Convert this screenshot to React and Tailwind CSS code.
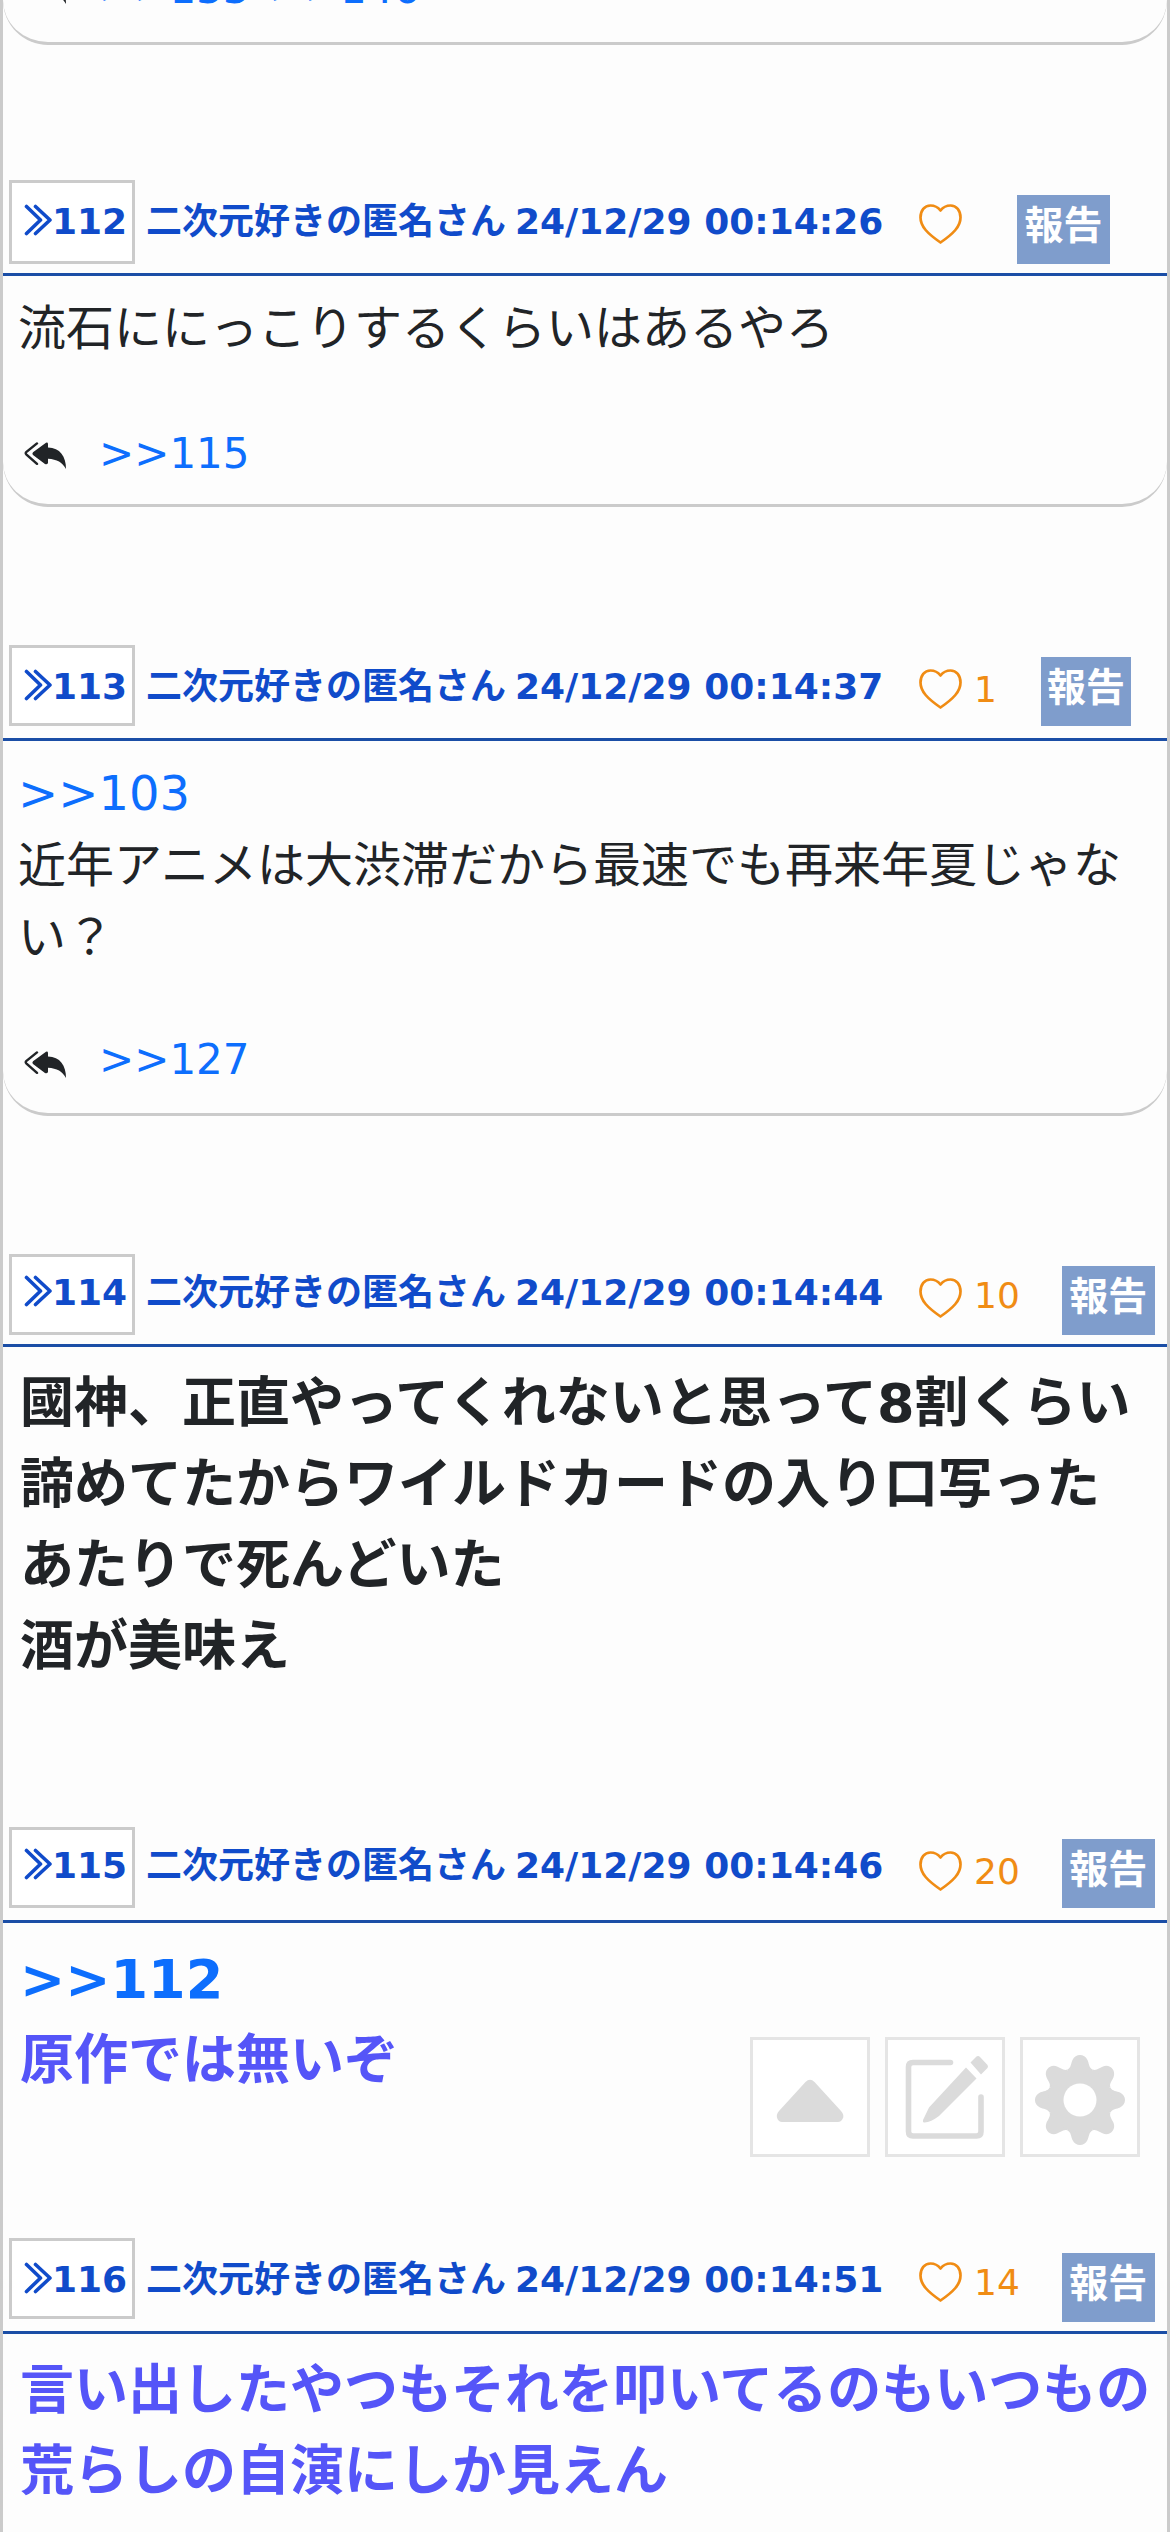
const posts = [
  {
    no: 112, time: '24/12/29 00:14:26', likes: '', gap: 'mt-[135px]', head: 'h-24', box: 'h-[84px] pt-3', name: 'mt-3',
    heart: 'mt-6', count: 'mt-[21px]', report: 'mt-[15px] w-[93px] ml-[55px]',
    card: 'h-[231px] rounded-b-[45px] border-b-[3px]',
    text: 'text-5xl leading-[72px] text-[#212427] pl-[15px]', lines: ['流石ににっこりするくらいはあるやろ'], reply: '>>115', replyGap: 'mt-[58px]', icon: 'mt-5',
  },
  {
    no: 113, time: '24/12/29 00:14:37', likes: '1', gap: 'mt-[138px]', head: 'h-24', box: 'h-[81px] pt-3', name: 'mt-3',
    heart: 'mt-6', count: 'mt-[15px]', report: 'mt-3 w-[90px] ml-[44px]',
    card: 'h-[375px] rounded-b-[45px] border-b-[3px]',
    text: 'text-5xl leading-[72px] text-[#212427] pl-[15px]', quote: '>>103',
    lines: ['近年アニメは大渋滞だから最速でも再来年夏じゃな', 'い？'], reply: '>>127', replyGap: 'mt-[55px]', icon: 'mt-[23px]',
  },
  {
    no: 114, time: '24/12/29 00:14:44', likes: '10', gap: 'mt-[138px]', head: 'h-[93px]', box: 'h-[81px] pt-[9px]', name: 'mt-[9px]',
    heart: 'mt-6', count: 'mt-3', report: 'mt-3 w-[93px] ml-[42px]',
    card: 'h-[480px]',
    text: 'text-[54px] leading-[81px] font-bold text-[#212427] pl-[17px]',
    lines: ['國神、正直やってくれないと思って8割くらい', '諦めてたからワイルドカードの入り口写った', 'あたりで死んどいた', '酒が美味え'],
  },
  {
    no: 115, time: '24/12/29 00:14:46', likes: '20', gap: '', head: 'h-24', box: 'h-[81px] pt-[9px]', name: 'mt-[9px]',
    heart: 'mt-6', count: 'mt-[15px]', report: 'mt-3 w-[93px] ml-[42px]',
    card: 'h-[315px]',
    text: 'text-[54px] leading-[81px] font-bold text-[#5555f8] pl-[17px]', quote: '>>112',
    lines: ['原作では無いぞ'],
  },
  {
    no: 116, time: '24/12/29 00:14:51', likes: '14', gap: '', head: 'h-24', box: 'h-[81px] pt-3', name: 'mt-3',
    heart: 'mt-6', count: 'mt-[15px]', report: 'mt-[15px] w-[93px] ml-[42px]',
    card: 'h-[198px]',
    text: 'text-[54px] leading-[81px] font-bold text-[#5555f8] pl-[17px]',
    lines: ['言い出したやつもそれを叩いてるのもいつもの', '荒らしの自演にしか見えん'],
  },
];

function Angles() {
  return (
    <svg className="mt-[9px] h-8 w-7 shrink-0" viewBox="0 0 28 32" fill="none" stroke="currentColor" strokeWidth="3.6" strokeLinecap="round" strokeLinejoin="round">
      <path d="M2.500 2.500 16.500 16 2.500 29.500M11.500 2.500 26 16 11.500 29.500" />
    </svg>
  );
}

function Heart() {
  return (
    <svg className="h-10 w-[43px]" viewBox="0 0 43 40" fill="none" stroke="#f08c14" strokeWidth="2.7" strokeLinejoin="round">
      <path d="M21.500 6.500C18 2 13.500 1.500 11.500 1.500C5.500 1.500 1.500 6.500 1.500 13.500C1.500 22.500 8.500 29.500 21.500 38.500C34.500 29.500 41.500 22.500 41.500 13.500C41.500 6.500 37.500 1.500 31.500 1.500C29.500 1.500 25 2 21.500 6.500Z" />
    </svg>
  );
}

function ReplyAll() {
  return (
    <svg className="h-7 w-[42px]" viewBox="0 0 42 30" preserveAspectRatio="none" fill="none">
      <path d="M13 1.500 2.500 10.500Q1 12 2.500 13.500L13 23.500" stroke="#212427" strokeWidth="2.400" strokeLinecap="round" />
      <path d="M22 .7Q24 .2 24 2.200V6C36 6 42 16 42 29C38.500 22 33 18.500 24 18V22.500Q23 24.500 21 23.500L9 14Q7.700 12.500 9 11Z" fill="#212427" />
    </svg>
  );
}

function Replies({ icon, children }) {
  return (
    <div className="flex h-[63px] shrink-0 items-start pl-[21px] text-[42px] leading-[63px] text-[#0d6efd]">
      <div className={`mr-[33px] ${icon}`}><ReplyAll /></div>
      {children}
    </div>
  );
}

function Post({ p }) {
  return (
    <section className={p.gap}>
      <header className={`flex items-start border-b-[3px] border-[#1b4ea6] pl-1.5 ${p.head}`}>
        <div className={`flex w-[126px] shrink-0 border-[3px] border-[#cbcbcb] bg-white pl-3 text-4xl leading-[54px] font-bold text-[#104bca] ${p.box}`}>
          <Angles />
          <span>{p.no}</span>
        </div>
        <div className={`ml-[11px] flex w-[773px] shrink-0 gap-[9px] border-t-[3px] border-transparent text-4xl leading-[54px] font-bold whitespace-nowrap text-[#104bca] ${p.name}`}>
          <span>二次元好きの匿名さん</span>
          <span>{p.time}</span>
        </div>
        <div className={`shrink-0 ${p.heart}`}><Heart /></div>
        {p.likes && (
          <div className={`ml-3 border-t-[3px] border-transparent text-4xl leading-[54px] text-[#f08c14] ${p.count}`}>{p.likes}</div>
        )}
        <div className={`h-[69px] shrink-0 bg-[#7f9dcc] text-center text-[39px] leading-[61px] font-bold text-white ${p.report}`}>報告</div>
      </header>
      <div className={`border-[#cbcbcb] pt-4 ${p.card}`}>
        <div className={`whitespace-nowrap ${p.text}`}>
          {p.quote && <div className="text-[#0d6efd]">{p.quote}</div>}
          {p.lines.map((line) => <div key={line}>{line}</div>)}
        </div>
        {p.reply && <div className={p.replyGap}><Replies icon={p.icon}>{p.reply}</Replies></div>}
      </div>
    </section>
  );
}

function Tools() {
  const box = 'flex size-[120px] items-center justify-center border-[3px] border-[#e5e5e5] bg-white';
  return (
    <div className="fixed top-[2037px] right-[30px] flex gap-[15px]">
      <div className={box}>
        <svg className="size-[114px]" viewBox="0 0 114 114">
          <path d="M52.500 42Q57 37.500 61.500 42L88 71Q92 75.500 89.500 79Q88 82 85 82H29Q26 82 24.500 79Q22.500 75 26 71Z" fill="#dbdbdb" />
        </svg>
      </div>
      <div className={box}>
        <svg className="size-[114px]" viewBox="0 0 114 114">
          <path d="M62.500 22.500H25Q20.500 22.500 20.500 27V91.500Q20.500 96 25 96H88.500Q93 96 93 91.500V57" fill="none" stroke="#dbdbdb" strokeWidth="5.600" strokeLinecap="round" />
          <path d="M78 27.500 88.500 38.500 51 76Q43 82 36.500 82.500Q34.500 83 35 80L41 67.500Z" fill="#dbdbdb" />
          <path d="M82.500 22.500 88.500 16.500Q90.500 15.500 92 17L99.500 25Q100.500 26.500 99.500 28L93 34.500Z" fill="#dbdbdb" />
        </svg>
      </div>
      <div className={box}>
        <svg className="size-[114px]" viewBox="-57 -60 114 114">
          <mask id="hub">
            <rect x="-57" y="-57" width="114" height="114" fill="white" />
            <circle cx="0" cy="0" r="16.500" fill="black" />
          </mask>
          <g fill="#dbdbdb" mask="url(#hub)">
            {[0, 45, 90, 135, 180, 225, 270, 315].map((a) => (
              <path key={a} transform={`rotate(${a})`} d="M0 0-12.600 -30.500C-8.900 -32-9 -37-7.500 -40C-4.500 -46.700 4.500 -46.700 7.500 -40C9 -37 8.900 -32 12.600 -30.500Z" />
            ))}
            <circle r="32" />
          </g>
        </svg>
      </div>
    </div>
  );
}

export default function App() {
  return (
    <main lang="ja" className="h-[2532px] w-[1170px] overflow-hidden border-x-[3px] border-[#cbcbcb] bg-[#fdfdfd] font-['DejaVu_Sans','Noto_Sans_CJK_JP',sans-serif]">
      <div className="flex h-[45px] flex-col justify-end rounded-b-[45px] border-b-[3px] border-[#cbcbcb] pb-[22px]">
        <Replies icon="mt-5"><span>&gt;&gt;133</span><span className="ml-5">&gt;&gt;146</span></Replies>
      </div>
      {posts.map((p) => <Post key={p.no} p={p} />)}
      <Tools />
    </main>
  );
}
